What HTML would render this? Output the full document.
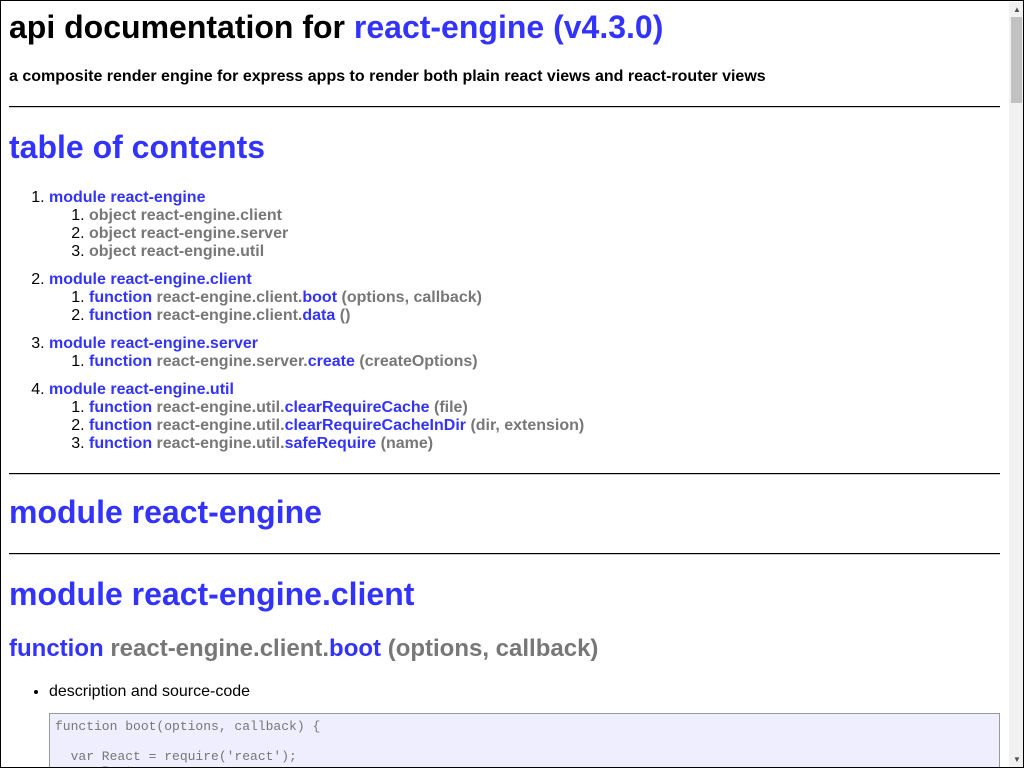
<!DOCTYPE html>
<html><head><meta charset="utf-8"><style>
html,body{margin:0;padding:0;overflow:hidden;}
html{width:1024px;height:768px;}
body{font-family:"Liberation Sans",Arial,sans-serif;color:#000;}
#frame{position:absolute;left:0;top:0;width:1022px;height:766px;border:1px solid #000;overflow:hidden;}
#content{position:absolute;left:8px;top:8px;width:991px;}
h1{font-size:32px;font-weight:bold;margin:0 0 21px 0;line-height:37px;}
h1.m{margin-top:19px;margin-bottom:22px;}
h2{font-size:24px;font-weight:bold;margin:22px 0 20px 0;line-height:28px;}
h4{font-size:16px;margin:22px 0 20px 0;line-height:18px;}
hr{border:0;border-top:1px solid #000;border-bottom:1px solid #ccc;height:0;margin:0;}
a{color:#33f;text-decoration:none;}
.g{color:#777;}
ol{margin:0;padding-left:40px;line-height:18px;}
ol.top{margin:0 0 20px 0;font-weight:bold;}
ol.top>li{margin-top:10px;}
ol.top>li:first-child{margin-top:0;}
ol ol{font-weight:bold;}
ol.top li::marker{font-weight:normal;color:#000;}
ul{margin:20px 0 0 0;padding-left:40px;line-height:18px;}
pre{margin:12px 0 0 0;background:#eef;border:1px solid #999;padding:5px 5px;font-family:"Liberation Mono",monospace;font-size:13px;line-height:15px;color:#777;}
#sb{position:absolute;left:1008px;top:1px;width:15px;height:766px;background:#f1f1f1;}
#thumb{position:absolute;left:2px;top:15px;width:11px;height:86px;background:#c1c1c1;}
.ar{position:absolute;left:4px;font-size:8px;color:#505050;line-height:8px;}
</style></head><body>
<div id="frame">
<div id="content">
<h1>api documentation for <a href="#">react-engine (v4.3.0)</a></h1>
<h4>a composite render engine for express apps to render both plain react views and react-router views</h4>
<hr>
<h1 style="margin-top:21px;margin-bottom:23px"><a href="#">table of contents</a></h1>
<ol class="top">
<li><a href="#">module react-engine</a>
<ol>
<li><span class="g">object react-engine.client</span></li>
<li><span class="g">object react-engine.server</span></li>
<li><span class="g">object react-engine.util</span></li>
</ol></li>
<li><a href="#">module react-engine.client</a>
<ol>
<li><a href="#">function</a> <span class="g">react-engine.client.</span><a href="#">boot</a> <span class="g">(options, callback)</span></li>
<li><a href="#">function</a> <span class="g">react-engine.client.</span><a href="#">data</a> <span class="g">()</span></li>
</ol></li>
<li><a href="#">module react-engine.server</a>
<ol>
<li><a href="#">function</a> <span class="g">react-engine.server.</span><a href="#">create</a> <span class="g">(createOptions)</span></li>
</ol></li>
<li><a href="#">module react-engine.util</a>
<ol>
<li><a href="#">function</a> <span class="g">react-engine.util.</span><a href="#">clearRequireCache</a> <span class="g">(file)</span></li>
<li><a href="#">function</a> <span class="g">react-engine.util.</span><a href="#">clearRequireCacheInDir</a> <span class="g">(dir, extension)</span></li>
<li><a href="#">function</a> <span class="g">react-engine.util.</span><a href="#">safeRequire</a> <span class="g">(name)</span></li>
</ol></li>
</ol>
<hr>
<h1 class="m"><a href="#">module react-engine</a></h1>
<hr>
<h1 style="margin-top:21px;margin-bottom:0"><a href="#">module react-engine.client</a></h1>
<h2><a href="#">function</a> <span class="g">react-engine.client.</span><a href="#">boot</a> <span class="g">(options, callback)</span></h2>
<ul><li>description and source-code
<pre>function boot(options, callback) {

  var React = require('react');
  var Router;
</pre></li></ul>
</div>
<div id="sb"><span class="ar" style="top:4px">▲</span><div id="thumb"></div><span class="ar" style="top:754px">▼</span></div>
</div>
</body></html>
